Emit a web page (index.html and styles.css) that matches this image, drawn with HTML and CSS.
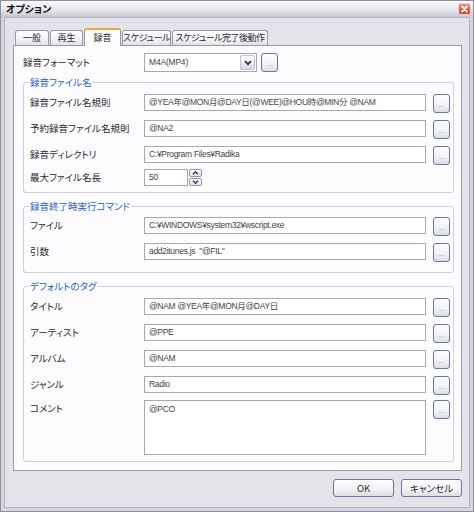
FILE: index.html
```html
<!DOCTYPE html>
<html lang="ja">
<head>
<meta charset="utf-8">
<title>オプション</title>
<link rel="stylesheet" href="styles.css">
</head>
<body>
<div class="window">
  <div class="titlebar">
    <span class="title">オプション</span>
    <span class="close">
      <svg width="13" height="12" viewBox="0 0 13 12">
        <defs>
          <linearGradient id="cg" x1="0" y1="0" x2="0" y2="1">
            <stop offset="0" stop-color="#f0907e"/>
            <stop offset="1" stop-color="#c33a2b"/>
          </linearGradient>
        </defs>
        <rect x="0.5" y="0.5" width="12" height="11" rx="2" fill="url(#cg)" stroke="#f2d6d2"/>
        <path d="M4 3.3 L9 8.7 M9 3.3 L4 8.7" stroke="#fff" stroke-width="1.7" stroke-linecap="round"/>
      </svg>
    </span>
  </div>
  <div class="frame">
    <div class="tabs">
      <div class="tab tab-general">一般</div>
      <div class="tab tab-play">再生</div>
      <div class="tab tab-rec active">録音</div>
      <div class="tab tab-sched">スケジュール</div>
      <div class="tab tab-after">スケジュール完了後動作</div>
    </div>
    <div class="panel">
      <div class="row format-row">
        <span class="label label-top">録音フォーマット</span>
        <div class="combo">
          <span class="combo-text">M4A(MP4)</span>
          <span class="combo-btn">
            <svg width="8" height="6" viewBox="0 0 8 6"><path d="M1 1.2 L4 4.2 L7 1.2" fill="none" stroke="#2f3450" stroke-width="1.8"/></svg>
          </span>
        </div>
        <button class="btn dots">...</button>
      </div>

      <div class="group g-file">
        <span class="legend">録音ファイル名</span>
        <div class="row">
          <span class="label">録音ファイル名規則</span>
          <div class="field">@YEA年@MON月@DAY日(@WEE)@HOU時@MIN分 @NAM</div>
          <button class="btn dots">...</button>
        </div>
        <div class="row">
          <span class="label">予約録音ファイル名規則</span>
          <div class="field">@NA2</div>
          <button class="btn dots">...</button>
        </div>
        <div class="row">
          <span class="label">録音ディレクトリ</span>
          <div class="field">C:¥Program Files¥Radika</div>
          <button class="btn dots">...</button>
        </div>
        <div class="row row-short">
          <span class="label">最大ファイル名長</span>
          <div class="field field-num">50</div>
          <div class="spinner">
            <span class="spin-half">
              <svg width="7" height="4" viewBox="0 0 7 4"><path d="M1 3.3 L3.5 0.8 L6 3.3" fill="none" stroke="#2f3450" stroke-width="1.4"/></svg>
            </span>
            <span class="spin-half">
              <svg width="7" height="4" viewBox="0 0 7 4"><path d="M1 0.7 L3.5 3.2 L6 0.7" fill="none" stroke="#2f3450" stroke-width="1.4"/></svg>
            </span>
          </div>
        </div>
      </div>

      <div class="group g-cmd">
        <span class="legend">録音終了時実行コマンド</span>
        <div class="row">
          <span class="label">ファイル</span>
          <div class="field">C:¥WINDOWS¥system32¥wscript.exe</div>
          <button class="btn dots">...</button>
        </div>
        <div class="row">
          <span class="label">引数</span>
          <div class="field">add2itunes.js &nbsp;"@FIL"</div>
          <button class="btn dots">...</button>
        </div>
      </div>

      <div class="group g-tag">
        <span class="legend">デフォルトのタグ</span>
        <div class="row">
          <span class="label">タイトル</span>
          <div class="field">@NAM @YEA年@MON月@DAY日</div>
          <button class="btn dots">...</button>
        </div>
        <div class="row">
          <span class="label">アーティスト</span>
          <div class="field">@PPE</div>
          <button class="btn dots">...</button>
        </div>
        <div class="row">
          <span class="label">アルバム</span>
          <div class="field">@NAM</div>
          <button class="btn dots">...</button>
        </div>
        <div class="row">
          <span class="label">ジャンル</span>
          <div class="field">Radio</div>
          <button class="btn dots">...</button>
        </div>
        <div class="row row-comment">
          <span class="label">コメント</span>
          <div class="field field-multi">@PCO</div>
          <button class="btn dots">...</button>
        </div>
      </div>
    </div>
    <div class="footer">
      <button class="btn btn-wide">OK</button>
      <button class="btn btn-wide">キャンセル</button>
    </div>
  </div>
</div>
</body>
</html>
```

FILE: styles.css
```css
html, body {
  margin: 0;
  padding: 0;
  background: #e4e3ea;
}

body {
  width: 474px;
  height: 512px;
  overflow: hidden;
  font-family: "Noto Sans CJK JP", "Liberation Sans", sans-serif;
  font-size: 9.5px;
  font-feature-settings: "palt" 1;
  color: #2a2a2a;
}

.window {
  box-sizing: border-box;
  width: 474px;
  height: 512px;
  border: 1px solid #8f8e9e;
  background: #d6d5df;
  display: flex;
  flex-direction: column;
}

.titlebar {
  height: 16px;
  flex: none;
  display: flex;
  align-items: center;
  padding: 0 2px 0 5px;
  background: linear-gradient(#fbfbfd, #e9e9f0 45%, #d9d9e3 75%, #c6c5d4);
}

.title {
  font-weight: bold;
  font-size: 10px;
  line-height: 14px;
  color: #111;
}

.close {
  margin-left: auto;
  display: flex;
}

.frame {
  flex: 1;
  margin: 0 3px 3px 3px;
  border: 1px solid #b4b3c2;
  background: #e4e3ea;
  padding: 10px 7px 0 8px;
  display: flex;
  flex-direction: column;
}

/* tabs */
.tabs {
  height: 17px;
  flex: none;
  display: flex;
  align-items: flex-end;
  gap: 1px;
  padding-left: 2px;
}

.tab {
  box-sizing: border-box;
  height: 15px;
  border: 1px solid #9a99a8;
  border-bottom: none;
  border-radius: 3px 3px 0 0;
  background: linear-gradient(#ffffff, #f2f2f5 60%, #e2e1e8);
  text-align: center;
  font-size: 9px;
  line-height: 13px;
  white-space: nowrap;
  color: #2a2a2a;
}

.tab-general { width: 34px; }
.tab-play { width: 33px; }
.tab-rec { width: 37px; }
.tab-sched { width: 49px; letter-spacing: -0.4px; }
.tab-after { width: 96px; letter-spacing: -0.5px; }

.tab.active {
  height: 18px;
  margin-bottom: -1px;
  border-top: 2px solid #f2a93b;
  background: #fcfcfe;
  line-height: 15px;
  position: relative;
  z-index: 1;
}

/* panel */
.panel {
  box-sizing: border-box;
  height: 426px;
  flex: none;
  border: 1px solid #9a99a8;
  background: #fcfcfe;
  padding: 7px 7px 0 9px;
  display: flex;
  flex-direction: column;
}

.row {
  display: flex;
  align-items: flex-start;
}

.row + .row {
  margin-top: 7px;
}

.row.row-short {
  margin-top: 4px;
}

.row.row-comment {
  margin-top: 5px;
}

.label {
  flex: none;
  width: 114px;
  line-height: 17px;
  white-space: nowrap;
  color: #2a2a2a;
}

.label-top {
  width: 121px;
  line-height: 19px;
}

/* combo */
.combo {
  box-sizing: border-box;
  width: 113px;
  height: 19px;
  border: 1px solid #a9a8b2;
  background: #fff;
  display: flex;
  margin-right: 4px;
}

.combo-text {
  flex: 1;
  padding-left: 4px;
  line-height: 17px;
  font-family: "Liberation Sans", "Noto Sans CJK JP", sans-serif;
  font-size: 8.5px;
  letter-spacing: -0.2px;
  color: #444;
}

.combo-btn {
  box-sizing: border-box;
  width: 15px;
  height: 15px;
  margin: 1px;
  border: 1px solid #c4c3d2;
  border-radius: 2px;
  background: linear-gradient(#ffffff, #ececf2 55%, #d8d8e2);
  display: flex;
  align-items: center;
  justify-content: center;
}

/* fields */
.field {
  box-sizing: border-box;
  flex: 1;
  min-width: 0;
  height: 17px;
  border: 1px solid #a9a8b2;
  background: #fff;
  padding: 0 4px;
  line-height: 15px;
  font-family: "Liberation Sans", "Noto Sans CJK JP", sans-serif;
  font-size: 8.5px;
  letter-spacing: -0.3px;
  color: #444;
  white-space: nowrap;
  overflow: hidden;
  margin-right: 7px;
}

.field-num {
  flex: none;
  width: 44px;
  margin-right: 1px;
}

.field-multi {
  height: 55px;
  padding-top: 1px;
}

.spinner {
  box-sizing: border-box;
  width: 13px;
  height: 17px;
  display: flex;
  flex-direction: column;
  gap: 1px;
}

.spin-half {
  box-sizing: border-box;
  flex: 1;
  border: 1px solid #8d99b2;
  border-radius: 2px;
  background: linear-gradient(#ffffff, #dfdfe8);
  display: flex;
  align-items: center;
  justify-content: center;
}

/* groups */
.group {
  position: relative;
  border: 1px solid #cfd0d8;
  border-radius: 3px;
  padding: 11px 3px 6px 6px;
  display: flex;
  flex-direction: column;
}

.g-file { margin-top: 10px; }
.g-cmd { margin-top: 13px; padding-top: 10px; padding-bottom: 10px; }
.g-tag { margin-top: 13px; padding-bottom: 6px; }

.legend {
  position: absolute;
  top: -7px;
  left: 5px;
  padding: 0 1px;
  background: #fcfcfe;
  color: #2d5dcc;
  line-height: 12px;
  white-space: nowrap;
}

/* buttons */
.btn {
  box-sizing: border-box;
  flex: none;
  border: 1px solid #66789a;
  border-radius: 3px;
  background: linear-gradient(#ffffff, #f3f3f6 55%, #dcdde6);
  padding: 0;
  margin: 0;
  font-family: "Noto Sans CJK JP", "Liberation Sans", sans-serif;
  font-feature-settings: "palt" 1;
  font-size: 9.5px;
  color: #2a2a2a;
}

.dots {
  width: 17px;
  height: 19px;
  font-family: "Liberation Sans", sans-serif;
  font-size: 7px;
  line-height: 7px;
  color: #8b8c9c;
  display: flex;
  align-items: flex-end;
  justify-content: center;
  padding-bottom: 4px;
}

.footer {
  display: flex;
  justify-content: flex-end;
  gap: 7px;
  margin-top: 8px;
}

.btn-wide {
  width: 61px;
  height: 18px;
  line-height: 16px;
}
```
